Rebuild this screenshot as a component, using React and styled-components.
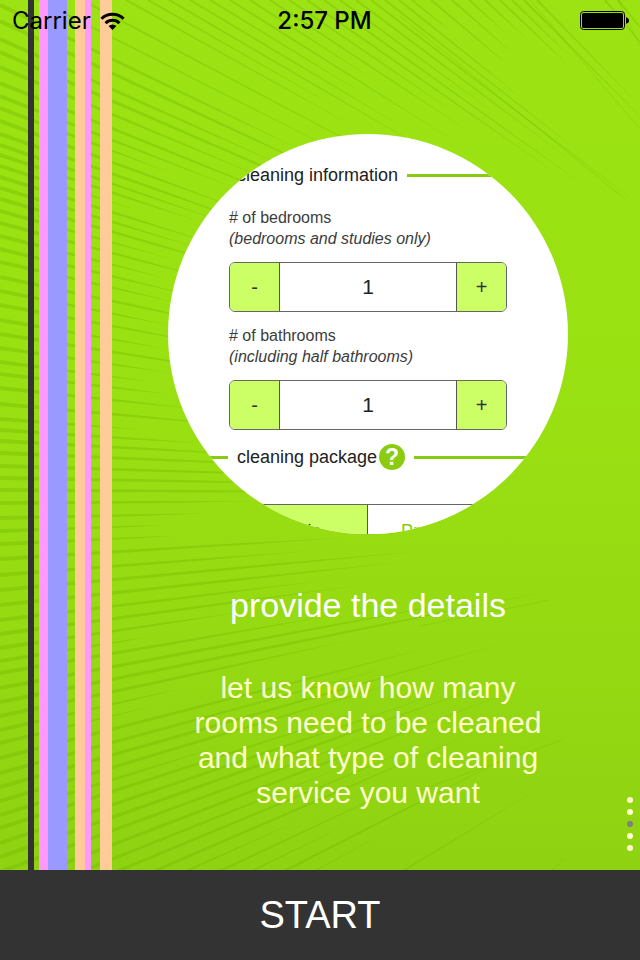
import React, { useState } from "react";
import styled, { createGlobalStyle } from "styled-components";

const GlobalStyle = createGlobalStyle`
  *, *::before, *::after { box-sizing: border-box; }
  body { margin: 0; font-family: "Liberation Sans", Arial, sans-serif; }
  button, input { font: inherit; margin: 0; }
`;

const Screen = styled.div`
  display: flex;
  flex-direction: column;
  min-height: 100vh;
`;

const Stage = styled.div`
  position: relative;
  flex: 1;
  display: flex;
  flex-direction: column;
  overflow: hidden;
  background: linear-gradient(#9de313 0%, #9ae112 40%, #97dc12 65%, #8fd212 100%);
`;

const Backdrop = styled.div`
  position: absolute;
  inset: 0;
  display: flex;
`;

const Rays = styled.svg`
  position: absolute;
  inset: 0;
  width: 100%;
  height: 100%;
`;

const Stripe = styled.div`
  position: relative;
  flex: none;
  width: ${(p) => p.$width}px;
  margin-left: ${(p) => p.$gap}px;
  background: ${(p) => p.$color};
`;

const StatusBar = styled.header`
  position: relative;
  display: grid;
  grid-template-columns: 1fr auto 1fr;
  align-items: center;
  height: 42px;
  padding: 0 11px 0 12px;
  font-family: Inter, "Liberation Sans", sans-serif;
  font-size: 24px;
  line-height: 28px;
  color: #000;
`;

const Carrier = styled.div`
  display: flex;
  align-items: center;
  gap: 9px;
`;

const Clock = styled.time`
  padding-left: 8px;
  font-weight: 500;
`;

const BatteryIcon = styled.svg`
  justify-self: end;
`;

const Slide = styled.main`
  position: relative;
  flex: 1;
  display: flex;
  flex-direction: column;
  align-items: center;
  padding: 92px 16px 40px 112px;
`;

const Preview = styled.section`
  flex: none;
  display: flex;
  flex-direction: column;
  width: 400px;
  height: 400px;
  padding-top: 28px;
  overflow: hidden;
  border-radius: 50%;
  background: #fff;
  color: #333;
`;

const SectionHeading = styled.div`
  display: flex;
  align-items: center;
  flex: none;
  gap: 9px;
  height: 26px;
  margin-top: ${(p) => p.$top}px;
`;

const SectionTitle = styled.h2`
  display: flex;
  align-items: center;
  gap: 2px;
  margin: 0;
  font-size: 18px;
  font-weight: 400;
  line-height: 26px;
  color: #222;
`;

const Rule = styled.span`
  flex: ${(p) => (p.$lead ? "none" : "1")};
  width: ${(p) => (p.$lead ? "60px" : "auto")};
  height: 3px;
  background: #8c1;
`;

const HelpButton = styled.button`
  display: grid;
  place-items: center;
  width: 26px;
  height: 26px;
  padding: 0;
  border: 0;
  border-radius: 50%;
  background: #8bcd0e;
  color: #fff;
  font-size: 23px;
  font-weight: 700;
  line-height: 26px;
`;

const Field = styled.div`
  margin: ${(p) => p.$top}px 61px 0;
`;

const FieldLabel = styled.label`
  display: block;
  margin-bottom: 13px;
  font-size: 16px;
  line-height: 21px;
  color: #3c3c3c;
`;

const Hint = styled.em`
  display: block;
`;

const Stepper = styled.div`
  display: flex;
  height: 50px;
  overflow: hidden;
  border: 1px solid #666;
  border-radius: 6px;
`;

const StepButton = styled.button`
  flex: none;
  width: 49px;
  padding: 0;
  border: 0;
  background: #cf6;
  color: #333;
  font-size: 20px;
`;

const StepValue = styled.input`
  flex: 1;
  min-width: 0;
  padding: 0;
  border: 1px solid #555;
  border-width: 0 1px;
  background: #fff;
  color: #222;
  font-size: 21px;
  text-align: center;
`;

const Packages = styled.div`
  display: grid;
  grid-template-columns: 1fr 1fr;
  flex: none;
  height: 54px;
  margin: 34px 61px 0;
  border: 1px solid #666;
  border-radius: 6px;
  overflow: hidden;
`;

const PackageButton = styled.button`
  padding: 0;
  border: 0;
  border-right: ${(p) => (p.$selected ? "1px solid #555" : "0")};
  background: ${(p) => (p.$selected ? "#cf6" : "#fff")};
  color: ${(p) => (p.$selected ? "#333" : "#8c1")};
  font-size: 18px;
`;

const Title = styled.h1`
  margin: 50px 0 0;
  font-size: 34px;
  font-weight: 400;
  line-height: 42px;
  color: #fff;
`;

const Description = styled.p`
  max-width: 360px;
  margin: 44px 0 0;
  font-size: 30px;
  line-height: 35px;
  text-align: center;
  color: #ffc;
`;

const Pager = styled.nav`
  position: absolute;
  right: 7px;
  bottom: 19px;
  display: flex;
  flex-direction: column;
  gap: 6px;
`;

const Dot = styled.button`
  width: 6px;
  height: 6px;
  padding: 0;
  border: 0;
  border-radius: 50%;
  background: ${(p) => (p.$active ? "#808080" : "#ffc")};
`;

const StartButton = styled.button`
  flex: none;
  height: 90px;
  padding: 0;
  border: 0;
  background: #333;
  color: #fff;
  font-size: 38px;
  line-height: 44px;
`;

const STRIPES = [
  { gap: 28, width: 6, color: "#333" },
  { gap: 5, width: 9, color: "#f9f" },
  { gap: 0, width: 19, color: "#99f" },
  { gap: 8, width: 10, color: "#fc9" },
  { gap: 0, width: 6, color: "#f9f" },
  { gap: 9, width: 12, color: "#fc9" },
];

/* Rays that enter from the left edge: [y at the edge, x where the ray fades out]. */
const LEFT_RAYS = [
  [5, 300], [21, 370], [39, 290], [52, 390], [67, 260], [83, 315], [96, 230],
  [108, 170], [121, 245], [134, 270], [145, 225], [155, 200], [166, 135],
  [177, 215], [188, 195], [199, 240], [211, 170], [223, 210], [236, 165],
  [249, 190], [262, 175], [277, 230], [291, 170], [305, 200], [320, 165],
  [334, 230], [348, 170], [362, 150], [374, 170], [388, 195], [404, 230],
  [419, 140], [430, 200], [441, 250], [453, 290], [466, 300], [478, 310],
  [490, 330], [503, 250], [518, 205], [531, 165], [544, 175], [559, 340],
  [575, 310], [590, 420], [605, 400], [620, 320], [634, 360], [648, 240],
  [661, 150], [673, 335], [688, 480], [702, 560], [716, 350], [730, 180],
  [743, 150], [758, 430], [773, 390], [787, 500], [801, 420], [815, 220],
  [828, 370], [843, 440], [857, 500], [872, 380], [888, 520], [904, 350],
  [920, 430], [938, 480], [955, 300], [974, 410], [994, 350], [1016, 560],
  [1038, 390], [1062, 320], [1088, 340], [1116, 555], [1148, 340],
];

/* Rays that enter from the top edge: [x at the edge, y where the ray fades out]. */
const TOP_RAYS = [
  [38, 165], [82, 185], [126, 130], [148, 105],
  [169, 155], [190, 130], [210, 95], [230, 145], [250, 80], [270, 135],
  [289, 115], [307, 180], [324, 190], [340, 110], [356, 165], [371, 205],
  [385, 155], [399, 100], [412, 30], [431, 70], [452, 55], [469, 35], [485, 40],
  [500, 70], [512, 60], [524, 130], [537, 110], [605, 80], [618, 55],
];

const FOCUS = { x: 1020, y: 496 };

/* Each ray narrows slowly over most of its length, then comes to a point. */
function rayPath(x, y, t, width) {
  const dx = FOCUS.x - x;
  const dy = FOCUS.y - y;
  const length = Math.hypot(dx, dy);
  const nx = (-dy / length) * (width / 2);
  const ny = (dx / length) * (width / 2);
  const mx = x + dx * t * 0.65;
  const my = y + dy * t * 0.65;
  return [
    `M${x + nx} ${y + ny}`,
    `L${mx + nx / 2} ${my + ny / 2}`,
    `L${x + dx * t} ${y + dy * t}`,
    `L${mx - nx / 2} ${my - ny / 2}`,
    `L${x - nx} ${y - ny}Z`,
  ].join("");
}

function SunRays() {
  return (
    <Rays viewBox="0 0 640 870" preserveAspectRatio="xMinYMin slice" aria-hidden="true">
      <g fill="#72b800" fillOpacity="0.36">
        {LEFT_RAYS.map(([y, end]) => (
          <path key={y} d={rayPath(0, y, end / FOCUS.x, 4)} />
        ))}
        {TOP_RAYS.map(([x, end]) => (
          <path key={x} d={rayPath(x, 0, end / FOCUS.y, 2)} />
        ))}
      </g>
      <g fill="none" stroke="#72b800" strokeOpacity="0.3" strokeWidth="1">
        <path d="M530 0L640 129M400 16L625 199M618 0L640 46M420 626L550 600M420 790L562 740M552 870L564 859" />
      </g>
    </Rays>
  );
}

function WifiIcon() {
  return (
    <svg width="25" height="19" viewBox="0 0 25 19" aria-label="Wi-Fi">
      <g fill="none" stroke="#000" strokeWidth="3">
        <path d="M1.4 6.8a15.6 15.6 0 0 1 22.2 0" />
        <path d="M5.6 11.2a9.7 9.7 0 0 1 13.8 0" />
      </g>
      <path d="M8.6 14.1a5.5 5.5 0 0 1 7.8 0L12.5 18z" />
    </svg>
  );
}

function Battery() {
  return (
    <BatteryIcon width="49" height="20" viewBox="0 0 49 20" aria-label="Battery full">
      <rect x="0.5" y="0.5" width="44" height="18" rx="3" fill="none" stroke="#000" />
      <rect x="2" y="2" width="41" height="15" rx="1.5" />
      <path d="M46 6.2c2 .4 3 1.6 3 3.3s-1 2.9-3 3.3z" />
    </BatteryIcon>
  );
}

function RoomStepper({ id, label, hint, top }) {
  const [count, setCount] = useState(1);
  return (
    <Field $top={top}>
      <FieldLabel htmlFor={id}>
        {label}
        <Hint>{hint}</Hint>
      </FieldLabel>
      <Stepper>
        <StepButton type="button" onClick={() => setCount(Math.max(0, count - 1))}>-</StepButton>
        <StepValue id={id} value={count} readOnly />
        <StepButton type="button" onClick={() => setCount(count + 1)}>+</StepButton>
      </Stepper>
    </Field>
  );
}

export default function App() {
  return (
    <Screen>
      <GlobalStyle />
      <Stage>
        <Backdrop>
          <SunRays />
          {STRIPES.map((s, i) => (
            <Stripe key={i} $gap={s.gap} $width={s.width} $color={s.color} />
          ))}
        </Backdrop>
        <StatusBar>
          <Carrier>
            Carrier
            <WifiIcon />
          </Carrier>
          <Clock>2:57 PM</Clock>
          <Battery />
        </StatusBar>
        <Slide>
          <Preview>
            <SectionHeading $top={0}>
              <Rule $lead />
              <SectionTitle>cleaning information</SectionTitle>
              <Rule />
            </SectionHeading>
            <RoomStepper
              id="bedrooms"
              top={19}
              label="# of bedrooms"
              hint="(bedrooms and studies only)"
            />
            <RoomStepper
              id="bathrooms"
              top={13}
              label="# of bathrooms"
              hint="(including half bathrooms)"
            />
            <SectionHeading $top={14}>
              <Rule $lead />
              <SectionTitle>
                cleaning package
                <HelpButton type="button">?</HelpButton>
              </SectionTitle>
              <Rule />
            </SectionHeading>
            <Packages>
              <PackageButton type="button" $selected>Basic</PackageButton>
              <PackageButton type="button">Premium</PackageButton>
            </Packages>
          </Preview>
          <Title>provide the details</Title>
          <Description>
            let us know how many rooms need to be cleaned and what type of cleaning service you want
          </Description>
        </Slide>
        <Pager aria-label="Slides">
          {[0, 1, 2, 3, 4].map((n) => (
            <Dot key={n} type="button" aria-label={`Slide ${n + 1}`} $active={n === 2} />
          ))}
        </Pager>
      </Stage>
      <StartButton type="button">START</StartButton>
    </Screen>
  );
}
